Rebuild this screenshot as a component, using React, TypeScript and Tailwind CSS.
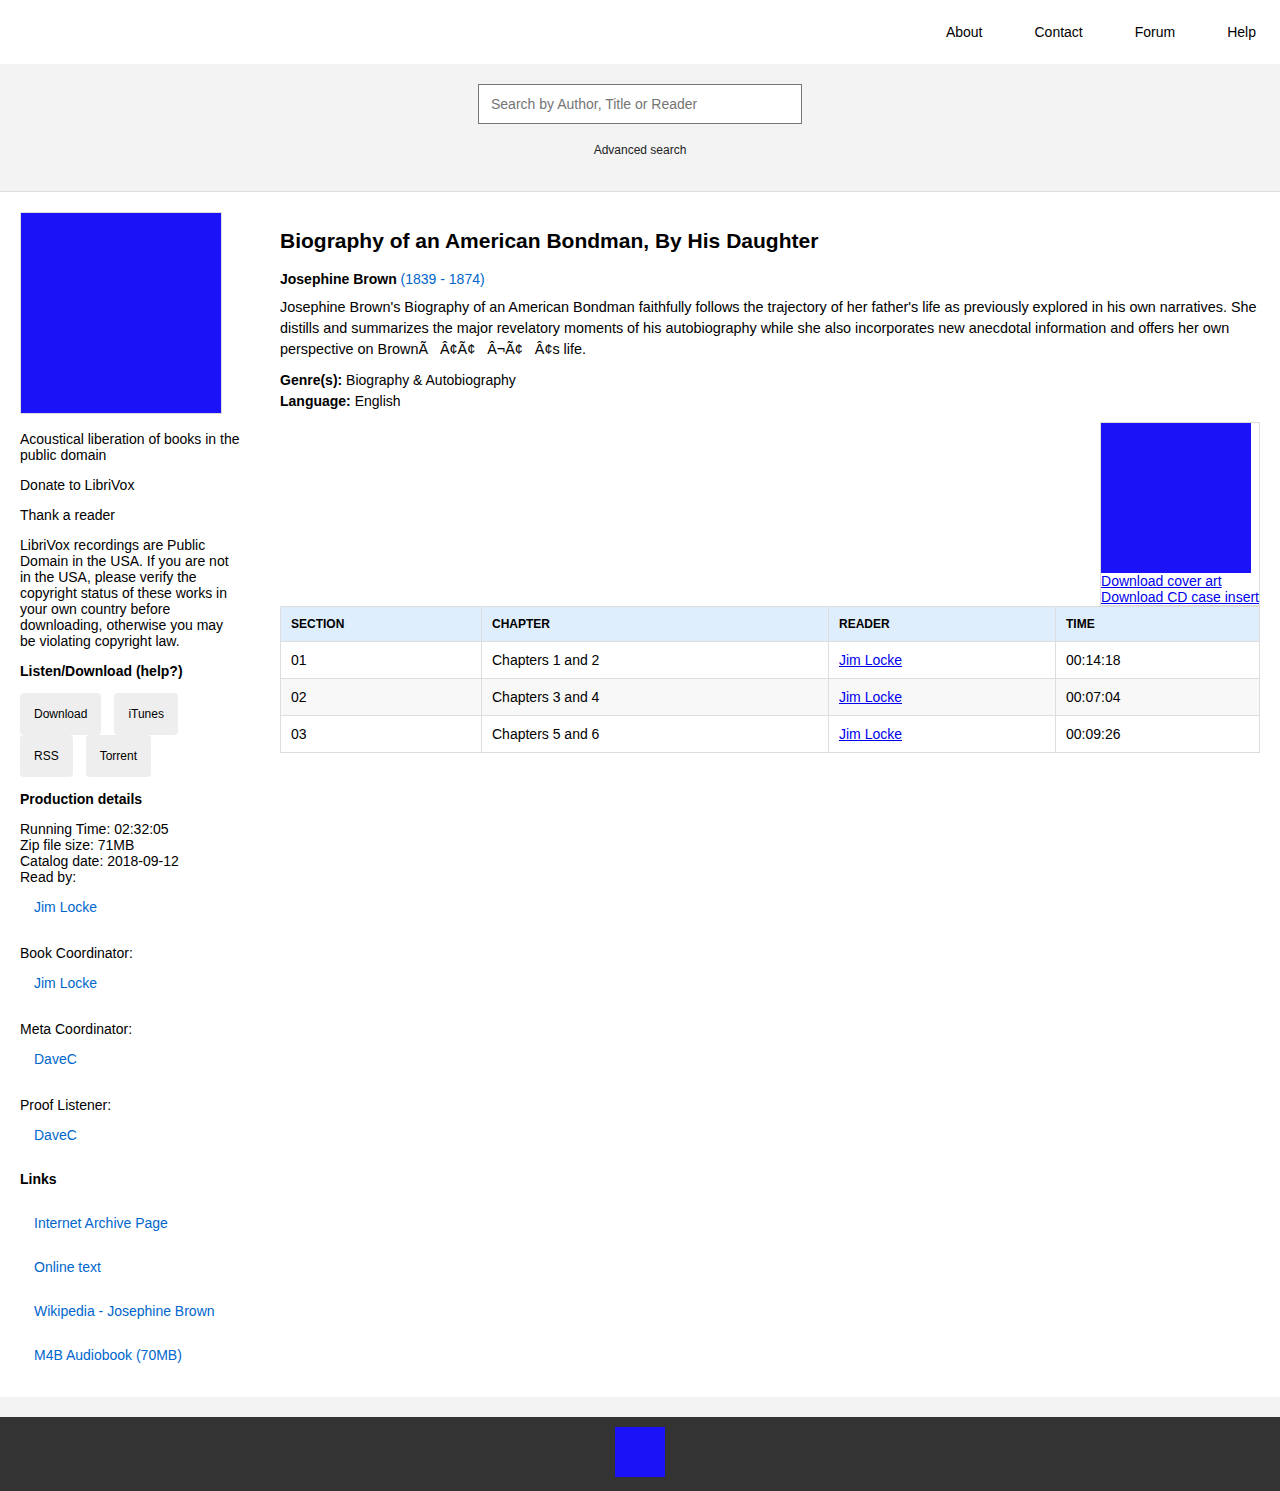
import * as React from 'react';

const sections = [
  { id: '01', chapter: 'Chapters 1 and 2', reader: 'Jim Locke', time: '00:14:18' },
  { id: '02', chapter: 'Chapters 3 and 4', reader: 'Jim Locke', time: '00:07:04' },
  { id: '03', chapter: 'Chapters 5 and 6', reader: 'Jim Locke', time: '00:09:26' },
];

const credits = [
  { label: 'Read by:', name: 'Jim Locke' },
  { label: 'Book Coordinator:', name: 'Jim Locke' },
  { label: 'Meta Coordinator:', name: 'DaveC' },
  { label: 'Proof Listener:', name: 'DaveC' },
];

const links = ['Internet Archive Page', 'Online text', 'Wikipedia - Josephine Brown', 'M4B Audiobook (70MB)'];

function Header() {
  return (
    <header>
      <nav className="h-16 flex items-center justify-end gap-[52px] pr-6 text-sm text-black">
        <a href="#">About</a>
        <a href="#">Contact</a>
        <a href="#">Forum</a>
        <a href="#">Help</a>
      </nav>
      <div className="bg-[#f3f3f3] border-b border-[#dddddd] pt-5 h-[128px] flex flex-col items-center">
        <input
          type="text"
          placeholder="Search by Author, Title or Reader"
          className="w-[324px] h-10 bg-white border border-[#767676] px-3 text-sm placeholder:text-[#757575] outline-none"
        />
        <a href="#" className="mt-[18px] text-xs text-[#222]">Advanced search</a>
      </div>
    </header>
  );
}

function Sidebar() {
  return (
    <aside className="w-[220px] shrink-0 text-sm leading-4 text-black">
      <div className="w-[202px] h-[202px] border border-[#dddddd] bg-[#1c12f7]" />

      <p className="mt-[17px]">Acoustical liberation of books in the public domain</p>
      <p className="mt-[14px]"><a href="#">Donate to LibriVox</a></p>
      <p className="mt-[14px]"><a href="#">Thank a reader</a></p>
      <p className="mt-[14px]">
        LibriVox recordings are Public Domain in the USA. If you are not in the USA, please verify the copyright
        status of these works in your own country before downloading, otherwise you may be violating copyright law.
      </p>

      <h3 className="mt-[14px] font-bold">Listen/Download (help?)</h3>
      <div className="mt-[14px] flex flex-wrap text-xs">
        {['Download', 'iTunes', 'RSS', 'Torrent'].map((b) => (
          <a key={b} href="#" className="bg-[#eeeeee] h-[42px] px-[14px] mr-[13px] flex items-center rounded-sm">
            {b}
          </a>
        ))}
      </div>

      <h3 className="mt-[14px] font-bold">Production details</h3>
      <div className="mt-[14px]">
        <div>Running Time: 02:32:05</div>
        <div>Zip file size: 71MB</div>
        <div>Catalog date: 2018-09-12</div>
      </div>
      {credits.map((c, i) => (
        <div key={c.label} className={i === 0 ? '' : 'mt-[30px]'}>
          <div>{c.label}</div>
          <div className="pt-[14px] pl-[14px]">
            <a href="#" className="text-[#0066cc]">{c.name}</a>
          </div>
        </div>
      ))}

      <h3 className="mt-7 font-bold">Links</h3>
      <ul className="mt-[14px]">
        {links.map((l) => (
          <li key={l} className="py-[14px] pl-[14px]">
            <a href="#" className="text-[#0066cc]">{l}</a>
          </li>
        ))}
      </ul>
    </aside>
  );
}

function Content() {
  return (
    <section className="flex-1 ml-10 text-sm text-black">
      <h1 className="mt-[17px] text-[21px] font-bold leading-6">Biography of an American Bondman, By His Daughter</h1>
      <p className="mt-[18px] leading-4">
        <span className="font-bold">Josephine Brown</span>{' '}
        <a href="#" className="text-[#0066cc]">(1839 - 1874)</a>
      </p>
      <p className="mt-[10px] text-[14.4px] leading-[21px]">
        Josephine Brown's Biography of an American Bondman faithfully follows the trajectory of her father's life as
        previously explored in his own narratives. She distills and summarizes the major revelatory moments of his
        autobiography while she also incorporates new anecdotal information and offers her own perspective on
        Brown{'Ã\u00a0\u00a0\u00a0Â¢Ã¢\u00a0\u00a0\u00a0Â¬Ã¢\u00a0\u00a0\u00a0Â¢s'} life.
      </p>
      <div className="mt-[10px] leading-[21px]">
        <p><span className="font-bold">Genre(s):</span> Biography &amp; Autobiography</p>
        <p><span className="font-bold">Language:</span> English</p>
      </div>

      <div className="mt-[10px] flex justify-end">
        <div className="border border-[#dddddd] leading-4">
          <div className="w-[150px] h-[150px] bg-[#1c12f7]" />
          <a href="#" className="block text-[#0000ee] underline">Download cover art</a>
          <a href="#" className="block text-[#0000ee] underline">Download CD case insert</a>
        </div>
      </div>

      <table className="w-full border-collapse border border-[#dddddd] text-left">
        <thead>
          <tr className="bg-[#dfeefc] h-[35px] text-xs font-bold uppercase">
            <th className="w-[201px] px-[10px] border border-[#dddddd]">Section</th>
            <th className="w-[347px] px-[10px] border border-[#dddddd]">Chapter</th>
            <th className="w-[227px] px-[10px] border border-[#dddddd]">Reader</th>
            <th className="px-[10px] border border-[#dddddd]">Time</th>
          </tr>
        </thead>
        <tbody>
          {sections.map((s, i) => (
            <tr key={s.id} className={i % 2 === 1 ? 'h-[37px] bg-[#f8f8f8]' : 'h-[37px] bg-white'}>
              <td className="px-[10px] border border-[#dddddd]">{s.id}</td>
              <td className="px-[10px] border border-[#dddddd]">{s.chapter}</td>
              <td className="px-[10px] border border-[#dddddd]">
                <a href="#" className="text-[#0000ee] underline">{s.reader}</a>
              </td>
              <td className="px-[10px] border border-[#dddddd]">{s.time}</td>
            </tr>
          ))}
        </tbody>
      </table>
    </section>
  );
}

export default function App() {
  return (
    <div className="bg-white font-['Liberation_Sans',Arial,sans-serif]">
      <Header />
      <main className="flex px-5 pt-5 pb-5">
        <Sidebar />
        <Content />
      </main>
      <div className="h-5 bg-[#f3f3f3]" />
      <footer className="bg-[#333333] h-[74px] pt-[10px] flex justify-center">
        <div className="w-[50px] h-[50px] bg-[#1c12f7]" />
      </footer>
    </div>
  );
}
